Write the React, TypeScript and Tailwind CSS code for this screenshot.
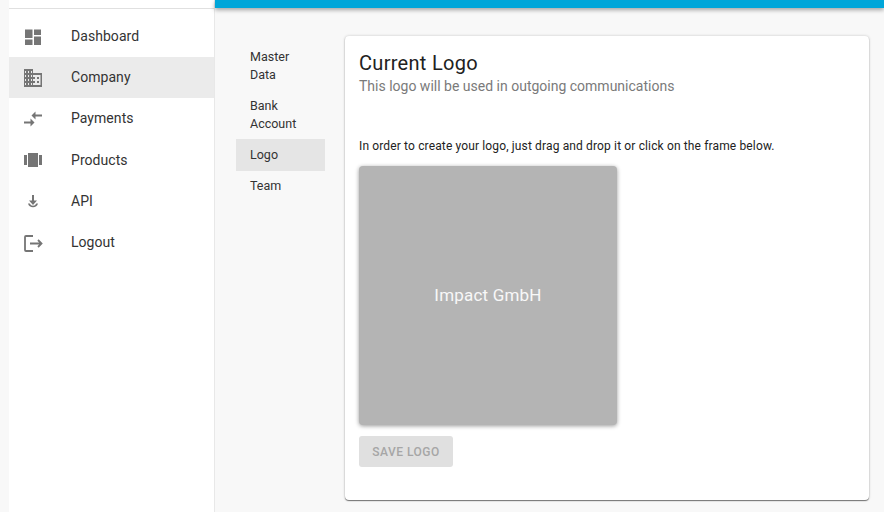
import React from "react";

const ico = "w-6 h-6 text-[#757575] fill-current";
const Dash = () => (<svg viewBox="0 0 24 24" className={ico}><path d="M4 4.500h7.500v8.500H4zM13 4.500h7v5.500h-7zM13 11.500h7v8.500h-7zM4 14.500h7.500v5.500H4z" /></svg>);
const Domain = () => (<svg viewBox="0 0 24 24" className={ico}><path d="M12 7V3H3v18h18V7H12zM5 19H4v-2h1v2zm0-4H4v-2h1v2zm0-4H4V9h1v2zm0-4H4V5h1v2zm3 12H7v-2h1v2zm0-4H7v-2h1v2zm0-4H7V9h1v2zm0-4H7V5h1v2zm3 12h-1v-2h1v2zm0-4h-1v-2h1v2zm0-4h-1V9h1v2zm0-4h-1V5h1v2zm8.500 12H12v-2h2v-2h-2v-2h2v-2h-2V9h7.500v10zM18 11h-2v2h2v-2zm0 4h-2v2h2v-2z" /></svg>);
const Compare = () => (<svg viewBox="0 0 24 24" className={ico}><path d="M9.500 14.500H3v2h6.500v3l4-4-4-4v3zM14.500 12.500v-3H21v-2h-6.500v-3l-4 4 4 4z" /></svg>);
const ViewArray = () => (<svg viewBox="0 0 24 24" className={ico}><path d="M3 7h3v10H3zM17 5H7v14h10zM18 7h3v10h-3z" /></svg>);
const Api = () => (<svg viewBox="0 0 24 24" className={ico}><path d="M11 6h2v5.500h3L12 16l-4-4.500h3z" /><path d="M7 14.500h1.800a3.400 3.400 0 0 0 6.400 0H17a5.200 5.200 0 0 1-10 0z" /></svg>);
const Logout = () => (<svg viewBox="0 0 24 24" className="w-6 h-6 text-[#757575]" fill="none" stroke="currentColor" strokeWidth="1.800"><path d="M12 5H5a1 1 0 0 0-1 1v13a1 1 0 0 0 1 1h7" /><path d="M9 12.500h11M17 9l3.500 3.500L17 16" /></svg>);

const items = [
  { label: "Dashboard", icon: <Dash /> },
  { label: "Company", icon: <Domain />, active: true },
  { label: "Payments", icon: <Compare /> },
  { label: "Products", icon: <ViewArray /> },
  { label: "API", icon: <Api /> },
  { label: "Logout", icon: <Logout /> },
];

const sub = [
  { label: <>Master<br />Data</> },
  { label: <>Bank<br />Account</> },
  { label: "Logo", active: true },
  { label: "Team" },
];

export default function App() {
  return (
    <div className="w-[884px] h-[512px] overflow-hidden flex bg-[#f8f8f8] text-[rgba(0,0,0,0.87)] [font-family:Roboto,sans-serif]">
      <aside className="ml-[9px] w-[206px] shrink-0 bg-white border-r border-[#e8e8e8] flex flex-col">
        <div className="h-[9px] shrink-0 border-b border-[#e0e0e0]" />
        <nav className="pt-[7px] flex flex-col">
          {items.map((it) => (
            <div
              key={it.label}
              className={`h-[41.200px] flex items-center pl-[12px] text-[14px] tracking-[0.05px] text-[#333] ${it.active ? "bg-[#ebebeb]" : ""}`}
            >
              <span className="w-[50px] shrink-0 flex">{it.icon}</span>
              <span>{it.label}</span>
            </div>
          ))}
        </nav>
      </aside>
      <div className="flex-1 min-w-0 flex flex-col">
        <div className="h-[8px] shrink-0 bg-[#00a6d9] shadow-[0_2px_4px_rgba(0,0,0,0.35)]" />
        <div className="flex-1 flex min-h-0 pt-[28px] pl-[21px]">
          <div className="w-[89px] shrink-0 mr-[20px] pt-[5.250px] flex flex-col text-[12.500px] leading-[17.750px] text-[#333]">
            {sub.map((s, i) => (
              <div key={i} className={`px-[14px] py-[6.750px] ${s.active ? "bg-[#e5e5e5]" : ""}`}>
                {s.label}
              </div>
            ))}
          </div>
          <main className="w-[524px] h-[464px] shrink-0 bg-white rounded-[4px] shadow-[0_1px_1px_rgba(0,0,0,0.5),0_0_3px_rgba(0,0,0,0.2)] pt-[14px] pl-[14px] flex flex-col items-start">
            <h1 className="text-[20px] leading-[26px] font-normal tracking-[0.3px] text-[#212121]">Current Logo</h1>
            <p className="text-[14px] leading-[20px] tracking-[0px] text-[#7a7a7a]">This logo will be used in outgoing communications</p>
            <p className="text-[12px] leading-[16px] mt-[42px] tracking-[0.14px] text-[#222]">In order to create your logo, just drag and drop it or click on the frame below.</p>
            <div className="w-[258px] h-[259px] mt-[12px] bg-[#b4b4b4] rounded-[4px] shadow-[0_1px_4px_rgba(0,0,0,0.4)] flex items-center justify-center text-white/90 text-[17px] tracking-[0.2px]">
              Impact GmbH
            </div>
            <button className="w-[94px] h-[31px] mt-[11px] bg-[#e0e0e0] rounded-[3px] text-[12px] font-medium tracking-[0.5px] text-[#a6a6a6]">
              SAVE LOGO
            </button>
          </main>
        </div>
      </div>
    </div>
  );
}
